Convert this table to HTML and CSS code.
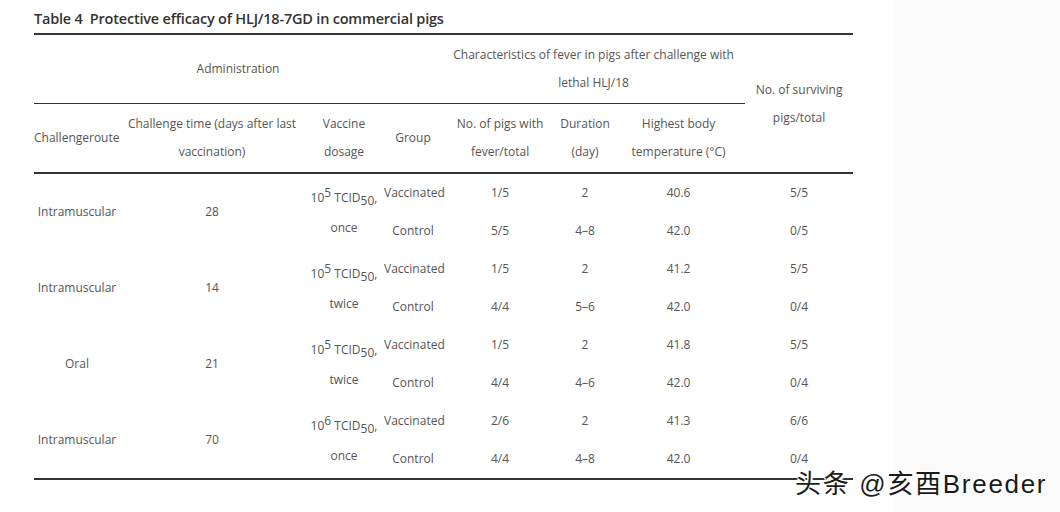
FILE: index.html
```html
<!DOCTYPE html>
<html>
<head>
<meta charset="utf-8">
<link rel="stylesheet" href="styles.css">
</head>
<body>
<div class="page">
  <main class="article">
    <h3 class="caption">Table 4&nbsp; Protective efficacy of HLJ/18-7GD in commercial pigs</h3>
    <table class="tbl">
      <colgroup>
        <col class="c1"><col class="c2"><col class="c3"><col class="c4"><col class="c5"><col class="c6"><col class="c7"><col class="c8">
      </colgroup>
      <thead>
        <tr class="h1">
          <th colspan="4" class="mid">Administration</th>
          <th colspan="3" class="mid">Characteristics of fever in pigs after challenge with<br>lethal HLJ/18</th>
          <th rowspan="2" class="surv">No. of surviving<br>pigs/total</th>
        </tr>
        <tr class="h2">
          <th class="left">Challengeroute</th>
          <th>Challenge time (days after last<br>vaccination)</th>
          <th>Vaccine<br>dosage</th>
          <th>Group</th>
          <th>No. of pigs with<br>fever/total</th>
          <th>Duration<br>(day)</th>
          <th>Highest body<br>temperature (°C)</th>
        </tr>
      </thead>
      <tbody>
        <tr class="top">
          <td rowspan="2">Intramuscular</td>
          <td rowspan="2">28</td>
          <td rowspan="2" class="dose">10<sup>5</sup> TCID<sub>50</sub>,<br>once</td>
          <td class="vac">Vaccinated</td><td>1/5</td><td>2</td><td>40.6</td><td>5/5</td>
        </tr>
        <tr><td class="ctl">Control</td><td>5/5</td><td>4–8</td><td>42.0</td><td>0/5</td></tr>
        <tr class="top">
          <td rowspan="2">Intramuscular</td>
          <td rowspan="2">14</td>
          <td rowspan="2" class="dose">10<sup>5</sup> TCID<sub>50</sub>,<br>twice</td>
          <td class="vac">Vaccinated</td><td>1/5</td><td>2</td><td>41.2</td><td>5/5</td>
        </tr>
        <tr><td class="ctl">Control</td><td>4/4</td><td>5–6</td><td>42.0</td><td>0/4</td></tr>
        <tr class="top">
          <td rowspan="2">Oral</td>
          <td rowspan="2">21</td>
          <td rowspan="2" class="dose">10<sup>5</sup> TCID<sub>50</sub>,<br>twice</td>
          <td class="vac">Vaccinated</td><td>1/5</td><td>2</td><td>41.8</td><td>5/5</td>
        </tr>
        <tr><td class="ctl">Control</td><td>4/4</td><td>4–6</td><td>42.0</td><td>0/4</td></tr>
        <tr class="top">
          <td rowspan="2">Intramuscular</td>
          <td rowspan="2">70</td>
          <td rowspan="2" class="dose">10<sup>6</sup> TCID<sub>50</sub>,<br>once</td>
          <td class="vac">Vaccinated</td><td>2/6</td><td>2</td><td>41.3</td><td>6/6</td>
        </tr>
        <tr><td class="ctl">Control</td><td>4/4</td><td>4–8</td><td>42.0</td><td>0/4</td></tr>
      </tbody>
    </table>
    <p class="next"><sup>5</sup></p>
  </main>
  <aside class="side"></aside>
  <div class="watermark">头条 @亥酉Breeder</div>
</div>
</body>
</html>
```

FILE: styles.css
```css
html, body {
  margin: 0;
  padding: 0;
  background: #ffffff;
}
body {
  width: 1060px;
  height: 512px;
  overflow: hidden;
  font-family: "Open Sans", "Liberation Sans", sans-serif;
}
.page {
  position: relative;
  display: flex;
  height: 512px;
}
.article {
  width: 859px;
  padding-left: 34px;
  background: #ffffff;
}
.side {
  flex: 1;
  background: #fafafa;
}
.caption {
  margin: 0;
  padding-top: 8px;
  height: 25px;
  font-size: 14.5px;
  line-height: 21px;
  font-weight: 600;
  color: #333333;
  letter-spacing: -0.2px;
}
.tbl {
  width: 819px;
  border-collapse: separate;
  border-spacing: 0;
  table-layout: fixed;
  color: #555555;
  font-size: 12px;
  border-top: 2px solid #333333;
  border-bottom: 2px solid #333333;
}
.c1 { width: 86px; }
.c2 { width: 184px; }
.c3 { width: 80px; }
.c4 { width: 58px; }
.c5 { width: 116px; }
.c6 { width: 54px; }
.c7 { width: 133px; }
.c8 { width: 108px; }
th {
  font-weight: 400;
  line-height: 28px;
  text-align: center;
  padding: 0;
  white-space: nowrap;
}
th.left { text-align: left; }
.h1 { height: 69px; }
.h1 th.mid { border-bottom: 1px solid #333333; }
.h2 { height: 70px; }
.h2 th { border-bottom: 2px solid #333333; }
th.surv {
  border-bottom: 2px solid #333333;
  padding-top: 0;
}
td {
  padding: 0;
  height: 38px;
  line-height: 20px;
  text-align: center;
  white-space: nowrap;
}
tbody tr { height: 38px; }
td.dose {
  line-height: 30px;
  padding-top: 1px;
}
td.dose sup, td.dose sub {
  font-size: 12px;
  line-height: 0;
}
td.dose sup { vertical-align: 5px; }
td.dose sub { vertical-align: -3px; }
.next {
  margin: 26px 0 0 469px;
  font-size: 12px;
  color: #555555;
  line-height: 20px;
}
.watermark {
  position: absolute;
  left: 795px;
  top: 468px;
  font-family: "Liberation Sans", "Noto Sans CJK SC", sans-serif;
  font-size: 26px;
  line-height: 32px;
  letter-spacing: 1.7px;
  color: #1a1a1a;
  white-space: nowrap;
  text-shadow: 1px 1px 0 #ffffff, -1px -1px 0 #ffffff, 1px -1px 0 #ffffff, -1px 1px 0 #ffffff, 2px 2px 1px #ffffff;
}
```
